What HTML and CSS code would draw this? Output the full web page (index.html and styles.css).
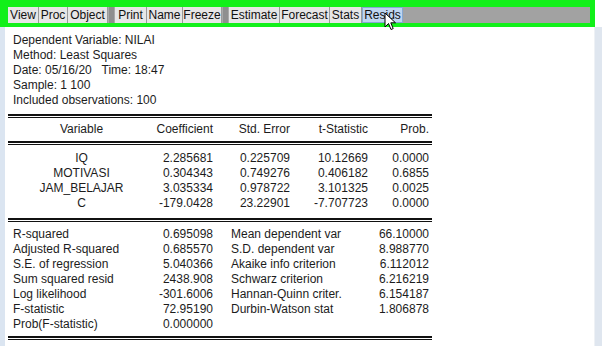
FILE: index.html
```html
<!DOCTYPE html>
<html lang="en">
<head>
    <meta charset="UTF-8">
    <title>Equation: Least Squares</title>
    <link rel="stylesheet" href="styles.css">
</head>
<body>
    <div class="window">
        <div class="toolbar-frame">
            <div class="toolbar">
                <span class="tb-btn w-view">View</span>
                <span class="tb-btn w-proc">Proc</span>
                <span class="tb-btn w-object">Object</span>
                <span class="tb-sep"></span>
                <span class="tb-btn w-print">Print</span>
                <span class="tb-btn w-name">Name</span>
                <span class="tb-btn w-freeze">Freeze</span>
                <span class="tb-sep"></span>
                <span class="tb-btn w-estimate">Estimate</span>
                <span class="tb-btn w-forecast">Forecast</span>
                <span class="tb-btn w-stats">Stats</span>
                <span class="tb-btn w-resids active">Resids</span>
            </div>
            <svg class="cursor" width="14" height="20" viewBox="0 0 14 20">
                <path d="M1 1 L1 15 L4.5 11.5 L7 17.5 L9.2 16.6 L6.8 10.8 L11.5 10.8 Z" fill="#fff" stroke="#000" stroke-width="1"/>
            </svg>
        </div>

        <div class="body-row">
            <div class="strip-left"></div>
            <div class="sheet">
                <div class="info">
                    <div>Dependent Variable: NILAI</div>
                    <div>Method: Least Squares</div>
                    <div>Date: 05/16/20&nbsp;&nbsp; Time: 18:47</div>
                    <div>Sample: 1 100</div>
                    <div>Included observations: 100</div>
                </div>

                <div class="rule-double"></div>
                <div class="coef-grid head">
                    <span class="c-var">Variable</span>
                    <span class="num">Coefficient</span>
                    <span class="num">Std. Error</span>
                    <span class="num">t-Statistic</span>
                    <span class="num">Prob.</span>
                </div>
                <div class="rule-double"></div>
                <div class="coef-grid rows">
                    <span class="c-var">IQ</span>
                    <span class="num">2.285681</span>
                    <span class="num">0.225709</span>
                    <span class="num">10.12669</span>
                    <span class="num">0.0000</span>

                    <span class="c-var">MOTIVASI</span>
                    <span class="num">0.304343</span>
                    <span class="num">0.749276</span>
                    <span class="num">0.406182</span>
                    <span class="num">0.6855</span>

                    <span class="c-var">JAM_BELAJAR</span>
                    <span class="num">3.035334</span>
                    <span class="num">0.978722</span>
                    <span class="num">3.101325</span>
                    <span class="num">0.0025</span>

                    <span class="c-var">C</span>
                    <span class="num">-179.0428</span>
                    <span class="num">23.22901</span>
                    <span class="num">-7.707723</span>
                    <span class="num">0.0000</span>
                </div>
                <div class="rule-double"></div>
                <div class="stat-grid">
                    <span>R-squared</span>
                    <span class="num">0.695098</span>
                    <span class="lbl2">Mean dependent var</span>
                    <span class="num">66.10000</span>

                    <span>Adjusted R-squared</span>
                    <span class="num">0.685570</span>
                    <span class="lbl2">S.D. dependent var</span>
                    <span class="num">8.988770</span>

                    <span>S.E. of regression</span>
                    <span class="num">5.040366</span>
                    <span class="lbl2">Akaike info criterion</span>
                    <span class="num">6.112012</span>

                    <span>Sum squared resid</span>
                    <span class="num">2438.908</span>
                    <span class="lbl2">Schwarz criterion</span>
                    <span class="num">6.216219</span>

                    <span>Log likelihood</span>
                    <span class="num">-301.6006</span>
                    <span class="lbl2">Hannan-Quinn criter.</span>
                    <span class="num">6.154187</span>

                    <span>F-statistic</span>
                    <span class="num">72.95190</span>
                    <span class="lbl2">Durbin-Watson stat</span>
                    <span class="num">1.806878</span>

                    <span>Prob(F-statistic)</span>
                    <span class="num">0.000000</span>
                    <span></span>
                    <span></span>
                </div>
                <div class="rule-double"></div>
            </div>
            <div class="strip-right"></div>
        </div>
    </div>
</body>
</html>
```

FILE: styles.css
```css
body {
    margin: 0;
    background: #ffffff;
    font-family: 'Liberation Sans', Arial, sans-serif;
    color: #1c1c1c;
}

.window {
    width: 602px;
    height: 346px;
    overflow: hidden;
}

/* green highlighted toolbar */
.toolbar-frame {
    position: relative;
    width: 595px;
    box-sizing: border-box;
    background: #12f01a;
    padding: 7px 5px 4px 8px;
}

.toolbar {
    display: flex;
    height: 16px;
    background: #a2a2a2;
}

.tb-btn {
    box-sizing: border-box;
    height: 16px;
    line-height: 16px;
    font-size: 12px;
    text-align: center;
    color: #111;
    background: #e6e6e6;
    border-right: 1px solid #9a9a9a;
}

.tb-btn.active {
    background: #bfd5f0;
    border: 1px solid #86a8d2;
    line-height: 14px;
}

.tb-sep {
    width: 7px;
    background: #8f8f8f;
    border-left: 1px solid #a9a9a9;
    border-right: 1px solid #a9a9a9;
    box-sizing: border-box;
}

.w-view { width: 31px; }
.w-proc { width: 29px; }
.w-object { width: 40px; }
.w-print { width: 32px; }
.w-name { width: 36px; }
.w-freeze { width: 39px; }
.w-estimate { width: 51px; }
.w-forecast { width: 50px; }
.w-stats { width: 32px; }
.w-resids { width: 41px; }

.cursor {
    position: absolute;
    left: 384px;
    top: 12px;
}

/* output sheet */
.body-row {
    display: flex;
    height: 319px;
}

.strip-left {
    width: 5px;
    background: #dbe5f1;
}

.strip-right {
    width: 7px;
    margin-left: auto;
    background: #dfe6ef;
    border-left: 1px solid #eef1f5;
}

.sheet {
    width: 427px;
    padding-left: 3px;
    font-size: 12px;
}

.info {
    padding: 6px 0 6px 5px;
    line-height: 15px;
}

.rule-double {
    width: 424px;
    height: 1px;
    border-top: 2px solid #111;
    border-bottom: 1px solid #111;
}

.coef-grid {
    display: grid;
    grid-template-columns: 147px 58px 77px 78px 61px;
    line-height: 15px;
}

.coef-grid.head {
    padding: 4px 0 4px;
}

.coef-grid.rows {
    padding: 6px 0 7px;
}

.c-var {
    text-align: center;
}

.num {
    text-align: right;
    white-space: nowrap;
}

.stat-grid {
    display: grid;
    grid-template-columns: 142px 58px 18px 138px 60px;
    padding: 5px 0 4px 5px;
    line-height: 15px;
}

.stat-grid .lbl2 {
    grid-column: 4;
}
```
